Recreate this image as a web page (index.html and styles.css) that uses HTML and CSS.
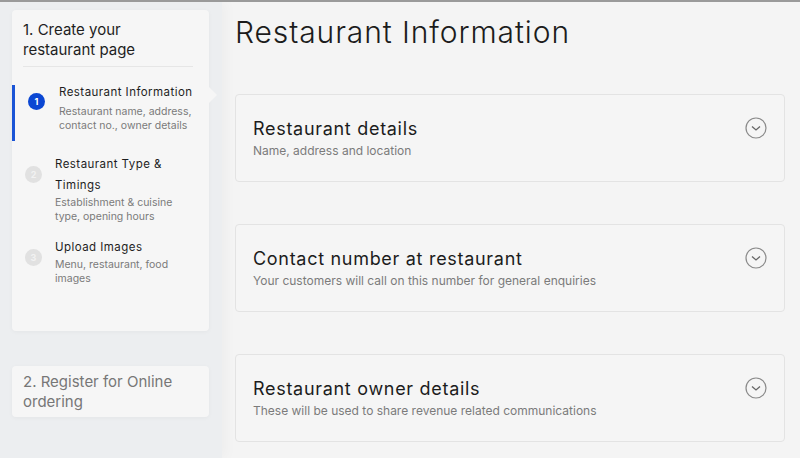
FILE: index.html
```html
<!DOCTYPE html>
<html>
<head>
<meta charset="utf-8">
<link rel="stylesheet" href="styles.css">
</head>
<body>
<div class="page">
  <aside class="sidebar">
    <section class="step-card">
      <h2 class="step-title">1. Create your restaurant page</h2>
      <ul class="substeps">
        <li class="substep active">
          <span class="num">1</span>
          <div class="sub-text">
            <div class="sub-name">Restaurant Information</div>
            <div class="sub-desc">Restaurant name, address, contact no., owner details</div>
          </div>
          <span class="pointer"></span>
        </li>
        <li class="substep">
          <span class="num">2</span>
          <div class="sub-text">
            <div class="sub-name">Restaurant Type &amp; Timings</div>
            <div class="sub-desc">Establishment &amp; cuisine type, opening hours</div>
          </div>
        </li>
        <li class="substep">
          <span class="num">3</span>
          <div class="sub-text">
            <div class="sub-name">Upload Images</div>
            <div class="sub-desc">Menu, restaurant, food images</div>
          </div>
        </li>
      </ul>
    </section>
    <section class="step-card collapsed">
      <h2 class="step-title muted">2. Register for Online ordering</h2>
    </section>
  </aside>
  <main class="main">
    <h1 class="page-title">Restaurant Information</h1>
    <div class="panels">
      <div class="panel">
        <div class="panel-text">
          <div class="panel-title">Restaurant details</div>
          <div class="panel-sub">Name, address and location</div>
        </div>
        <svg class="chev" width="22" height="22" viewBox="0 0 22 22"><circle cx="11" cy="11" r="10" fill="none" stroke="#8a8a8a" stroke-width="1.2"/><path d="M7 9.5 L11 13 L15 9.5" fill="none" stroke="#666" stroke-width="1.3"/></svg>
      </div>
      <div class="panel">
        <div class="panel-text">
          <div class="panel-title">Contact number at restaurant</div>
          <div class="panel-sub">Your customers will call on this number for general enquiries</div>
        </div>
        <svg class="chev" width="22" height="22" viewBox="0 0 22 22"><circle cx="11" cy="11" r="10" fill="none" stroke="#8a8a8a" stroke-width="1.2"/><path d="M7 9.5 L11 13 L15 9.5" fill="none" stroke="#666" stroke-width="1.3"/></svg>
      </div>
      <div class="panel">
        <div class="panel-text">
          <div class="panel-title">Restaurant owner details</div>
          <div class="panel-sub">These will be used to share revenue related communications</div>
        </div>
        <svg class="chev" width="22" height="22" viewBox="0 0 22 22"><circle cx="11" cy="11" r="10" fill="none" stroke="#8a8a8a" stroke-width="1.2"/><path d="M7 9.5 L11 13 L15 9.5" fill="none" stroke="#666" stroke-width="1.3"/></svg>
      </div>
    </div>
  </main>
</div>
</body>
</html>
```
FILE: styles.css
```css
* { box-sizing: border-box; }
html, body { margin: 0; padding: 0; }
body {
  width: 800px;
  height: 458px;
  overflow: hidden;
  background: #f4f4f4;
  font-family: Inter, "Open Sans", sans-serif;
  color: #1c1c1c;
  border-top: 2px solid #9a9a9a;
}
.page {
  display: flex;
  height: 456px;
}
.sidebar {
  width: 222px;
  flex: none;
  background: #eceef0;
  box-shadow: 4px 0 12px rgba(0,0,0,0.03);
  padding: 8px 0 0 12px;
  display: flex;
  flex-direction: column;
  gap: 35px;
}
.step-card {
  width: 197px;
  background: #f6f6f6;
  border-radius: 4px;
  box-shadow: 0 1px 4px rgba(0,0,0,0.04);
  position: relative;
}
.step-card:first-child { height: 321px; }
.step-title {
  margin: 0 16px 0 11px;
  padding: 10px 0 6px;
  font-size: 15px;
  font-weight: 400;
  line-height: 20px;
  color: #1e1e1e;
  border-bottom: 1px solid #e6e6e6;
}
.step-title.muted {
  color: #777;
  border-bottom: 0;
  padding: 6px 0 5px;
  font-size: 15px;
}
.substeps {
  list-style: none;
  margin: 0;
  padding: 18px 0 0;
}
.substep {
  display: flex;
  align-items: flex-start;
  position: relative;
  padding: 0 4px 0 13px;
  margin-top: 13px;
}
.sub-text { width: 140px; }
.substep.active {
  border-left: 3px solid #1a54d6;
  padding: 0 4px 8px 10px;
  margin-top: 0;
}
.num {
  width: 17px;
  height: 17px;
  border-radius: 50%;
  background: #e1e1e1;
  color: #f2f2f2;
  font-size: 9px;
  font-weight: 700;
  display: flex;
  align-items: center;
  justify-content: center;
  flex: none;
  margin-top: 12px;
  margin-right: 13px;
}
.substep.active .num {
  background: #0b47d3;
  color: #fff;
  margin-top: 8px;
  margin-left: 3px;
  margin-right: 14px;
}
.sub-name {
  font-size: 11.5px;
  line-height: 21px;
  letter-spacing: 0.45px;
  color: #1e1e1e;
}
.active .sub-name { line-height: 14px; margin-bottom: 6px; }
.sub-desc {
  font-size: 10.5px;
  line-height: 14px;
  color: #7a7a7a;
  width: 136px;
}
.pointer {
  position: absolute;
  right: -8px;
  top: 2px;
  width: 0;
  height: 0;
  border-top: 8px solid transparent;
  border-bottom: 8px solid transparent;
  border-left: 8px solid #f6f6f6;
}
.collapsed { height: 51px; }
.main {
  flex: 1;
  padding: 0 15px 0 13px;
}
.page-title {
  margin: 12px 0 0 0;
  font-size: 30px;
  font-weight: 300;
  line-height: 36px;
  letter-spacing: 0.9px;
  color: #1c1c1c;
}
.panels {
  margin-top: 44px;
  display: flex;
  flex-direction: column;
  gap: 42px;
}
.panel {
  height: 88px;
  background: #f5f5f5;
  border: 1px solid #e3e3e3;
  border-radius: 4px;
  display: flex;
  justify-content: space-between;
  align-items: flex-start;
  padding: 22px 17px 0 17px;
}
.panel-title {
  font-size: 18px;
  line-height: 24px;
  letter-spacing: 0.7px;
  color: #1c1c1c;
}
.panel-sub {
  font-size: 12px;
  line-height: 16px;
  color: #7b7b7b;
  margin-top: 2px;
}
.chev { margin-top: 0; }
```
